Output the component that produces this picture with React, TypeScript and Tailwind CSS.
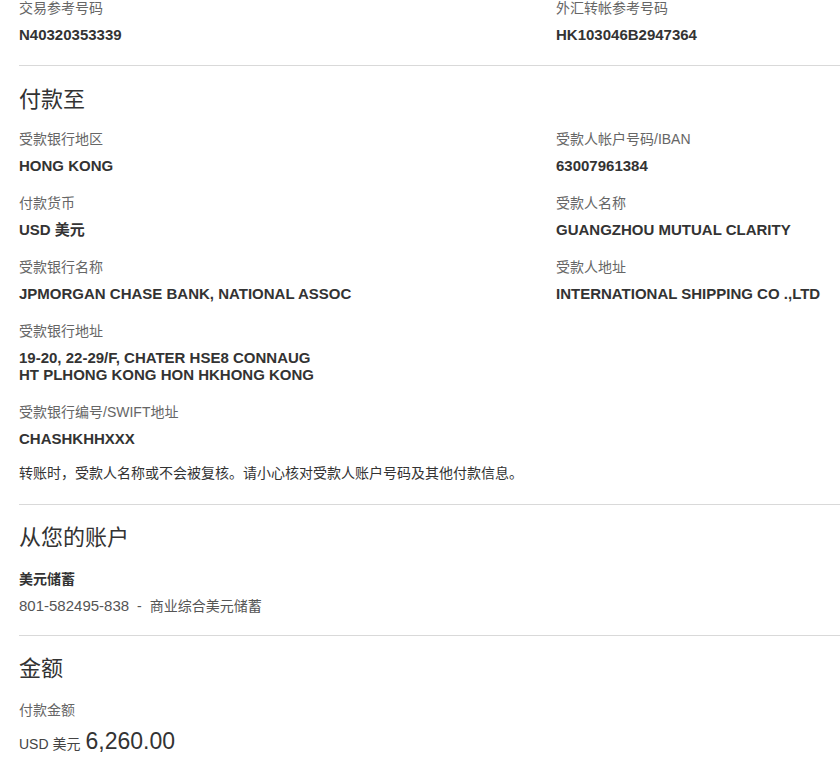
const FONT = "font-['Liberation_Sans','Noto_Sans_CJK_SC',sans-serif]";

type FieldProps = {
  label: string;
  value: React.ReactNode;
};

const Field = ({ label, value }: FieldProps) => (
  <div className="mb-[19px]">
    <div className="text-[14px] leading-[20px] text-[#666]">{label}</div>
    <div className="mt-[8px] text-[15px] leading-[17px] font-bold text-[#333]">{value}</div>
  </div>
);

const Heading = ({ children, className = 'mt-[18px]' }: { children: React.ReactNode; className?: string }) => (
  <h2 className={`${className} text-[22px] leading-[30px] font-normal text-[#333]`}>{children}</h2>
);

export default function App() {
  return (
    <div className={`${FONT} min-h-screen bg-white pl-[19px] text-[#333] overflow-hidden`}>
      {/* reference numbers */}
      <div className="-mt-[2px] grid grid-cols-[537px_1fr] border-b border-[#d9d9d9] pb-[3px]">
        <Field label="交易参考号码" value="N40320353339" />
        <Field label="外汇转帐参考号码" value="HK103046B2947364" />
      </div>

      <div className="border-b border-[#d9d9d9] pb-[21px]">
        <Heading className="mt-[19px]">付款至</Heading>
        <div className="mt-[14px] grid grid-cols-[537px_1fr]">
          <div>
            <Field label="受款银行地区" value="HONG KONG" />
            <Field label="付款货币" value="USD 美元" />
            <Field label="受款银行名称" value="JPMORGAN CHASE BANK, NATIONAL ASSOC" />
            <Field
              label="受款银行地址"
              value={
                <>
                  19-20, 22-29/F, CHATER HSE8 CONNAUG
                  <br />
                  HT PLHONG KONG HON HKHONG KONG
                </>
              }
            />
            <Field label="受款银行编号/SWIFT地址" value="CHASHKHHXXX" />
          </div>
          <div>
            <Field label="受款人帐户号码/IBAN" value="63007961384" />
            <Field label="受款人名称" value="GUANGZHOU MUTUAL CLARITY" />
            <Field label="受款人地址" value="INTERNATIONAL SHIPPING CO .,LTD" />
          </div>
        </div>
        <p className="-mt-[3px] text-[14px] leading-[20px] text-[#333]">
          转账时，受款人名称或不会被复核。请小心核对受款人账户号码及其他付款信息。
        </p>
      </div>

      <div className="border-b border-[#d9d9d9] pb-[19px]">
        <Heading>从您的账户</Heading>
        <div className="mt-[16px] text-[14px] leading-[20px] font-bold">美元储蓄</div>
        <div className="mt-[7px] flex items-center text-[14px] leading-[20px] text-[#555]">
          <span className="text-[15px]">801-582495-838</span>
          <span className="mx-[8px]">-</span>
          <span>商业综合美元储蓄</span>
        </div>
      </div>

      <div>
        <Heading>金额</Heading>
        <div className="mt-[16px] text-[14px] leading-[20px] text-[#666]">付款金额</div>
        <div className="mt-[7px] flex items-baseline leading-[28px]">
          <span className="text-[14px] text-[#444]">USD 美元</span>
          <span className="ml-[5px] text-[23px] text-[#333]">6,260.00</span>
        </div>
      </div>
    </div>
  );
}
